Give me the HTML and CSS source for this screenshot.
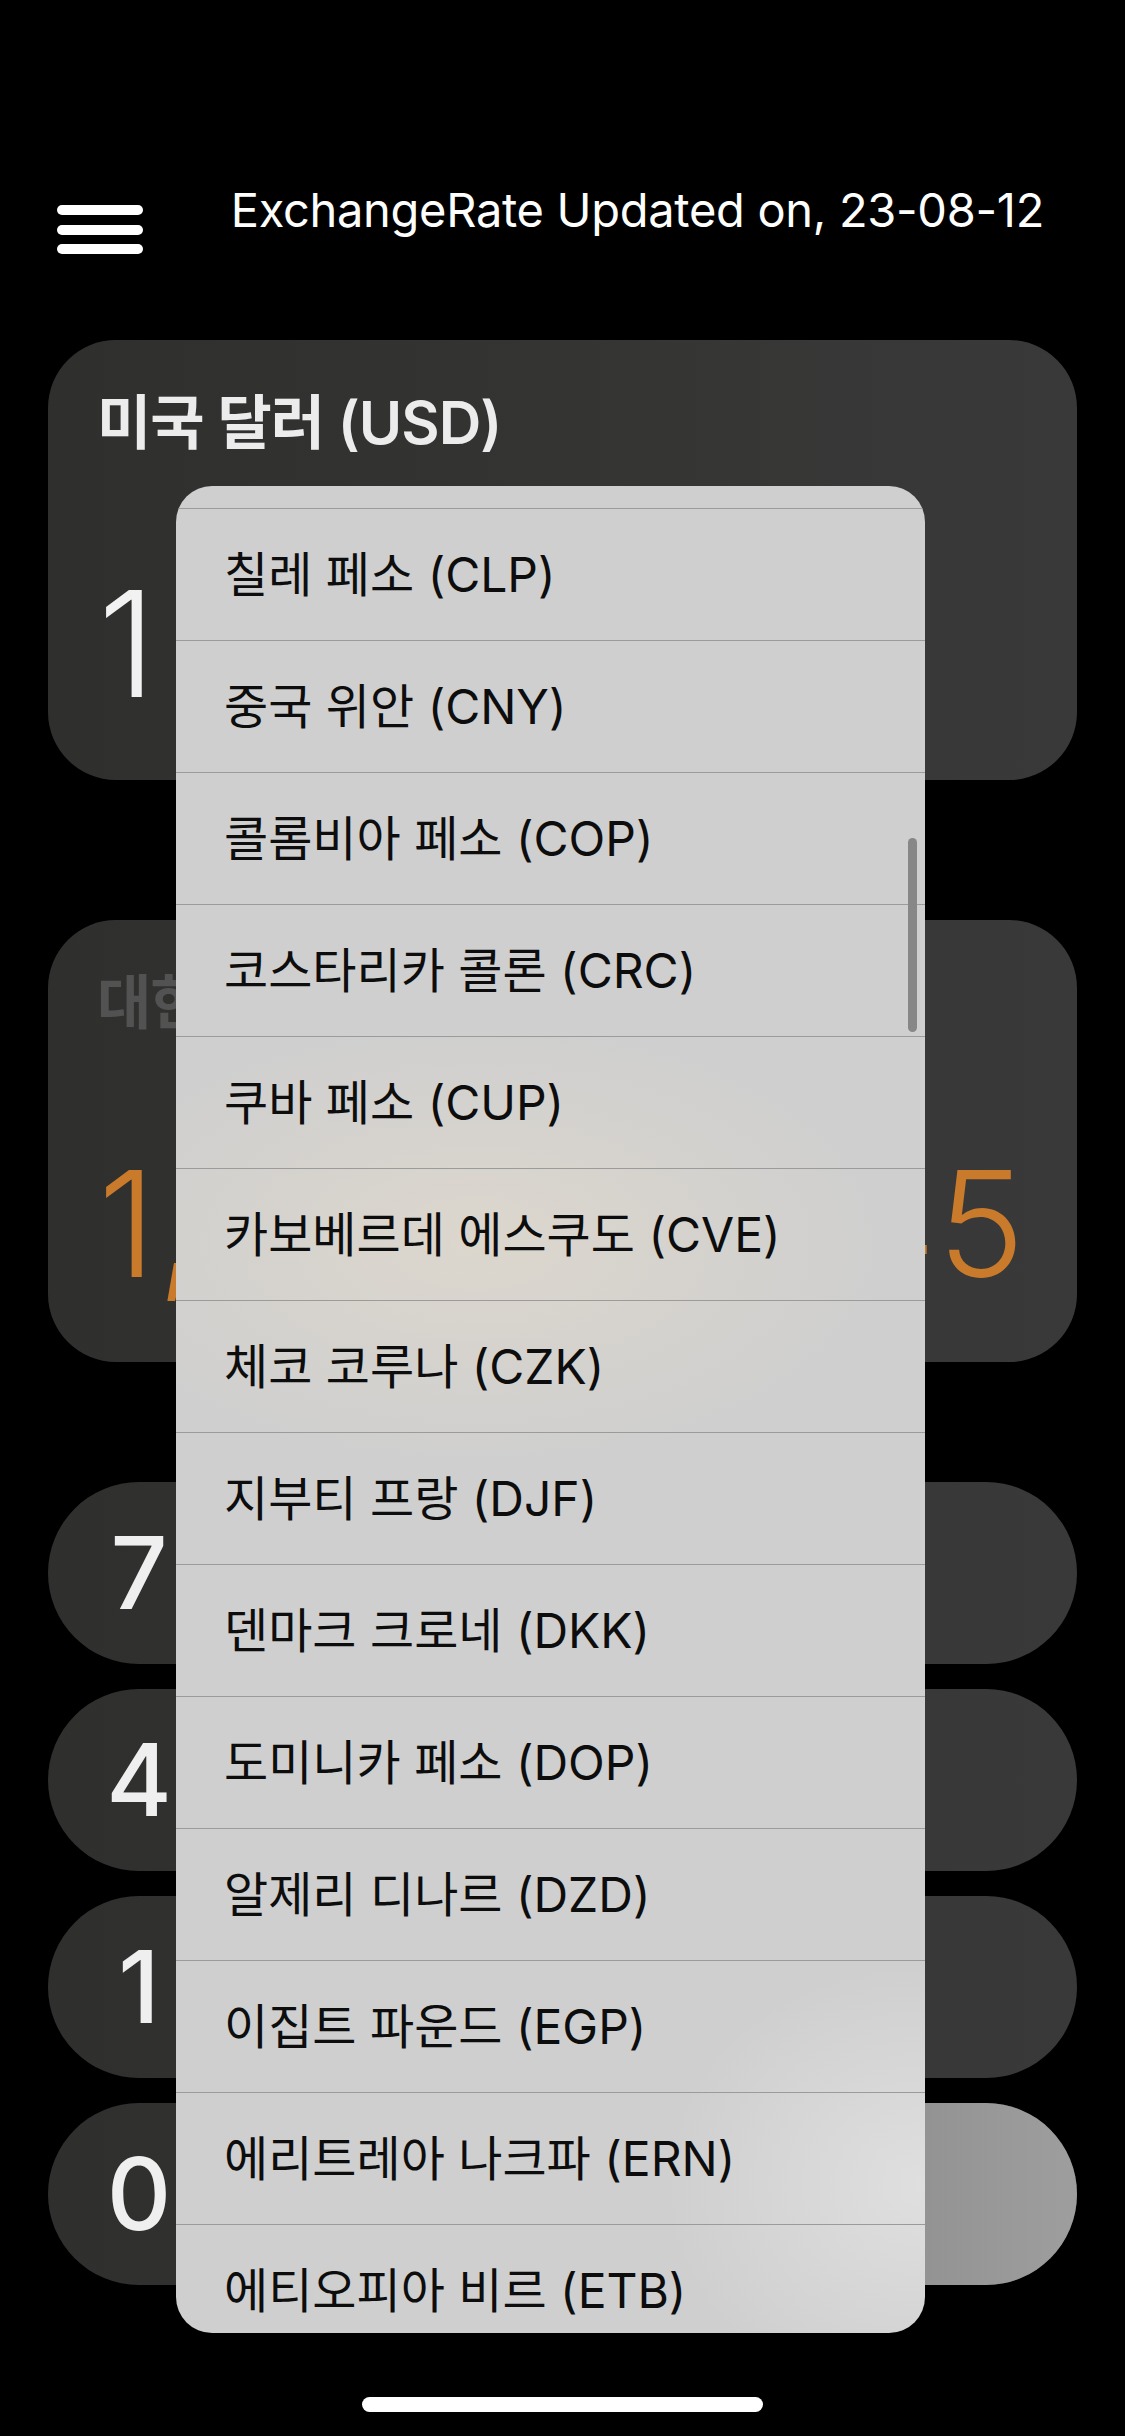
FILE: index.html
```html
<!DOCTYPE html>
<html lang="ko">
<head>
<meta charset="utf-8">
<title>Exchange Rate</title>
<link rel="stylesheet" href="styles.css">
</head>
<body>
<div class="screen">
  <header class="topbar">
    <button class="menu-btn" aria-label="menu"><span></span><span></span><span></span></button>
    <p class="updated">ExchangeRate Updated on, 23-08-12</p>
  </header>

  <main class="content">
    <section class="card card-from">
      <h2 class="card-label">미국 달러 (USD)</h2>
      <div class="card-value">1</div>
    </section>
    <section class="card card-to">
      <h2 class="card-label muted">대한민국 원 (KRW)</h2>
      <div class="card-value accent">1,331.802445</div>
    </section>

    <div class="keypad">
      <div class="key-row"><span class="key">7</span><span class="key">8</span><span class="key">9</span></div>
      <div class="key-row"><span class="key">4</span><span class="key">5</span><span class="key">6</span></div>
      <div class="key-row"><span class="key">1</span><span class="key">2</span><span class="key">3</span></div>
      <div class="key-row"><span class="key">0</span><span class="key">.</span><span class="key key-eq">=</span></div>
    </div>
  </main>

  <div class="dropdown">
    <ul class="dropdown-list">
      <li class="option">칠레 페소 (CLP)</li>
      <li class="option">중국 위안 (CNY)</li>
      <li class="option">콜롬비아 페소 (COP)</li>
      <li class="option">코스타리카 콜론 (CRC)</li>
      <li class="option">쿠바 페소 (CUP)</li>
      <li class="option">카보베르데 에스쿠도 (CVE)</li>
      <li class="option">체코 코루나 (CZK)</li>
      <li class="option">지부티 프랑 (DJF)</li>
      <li class="option">덴마크 크로네 (DKK)</li>
      <li class="option">도미니카 페소 (DOP)</li>
      <li class="option">알제리 디나르 (DZD)</li>
      <li class="option">이집트 파운드 (EGP)</li>
      <li class="option">에리트레아 나크파 (ERN)</li>
      <li class="option">에티오피아 비르 (ETB)</li>
    </ul>
    <div class="scroll-thumb"></div>
  </div>

  <div class="home-indicator"></div>
</div>
</body>
</html>
```

FILE: styles.css
```css
* {
  box-sizing: border-box;
  margin: 0;
  padding: 0;
}

html,
body {
  background: #000;
}

body {
  width: 1125px;
  height: 2436px;
  overflow: hidden;
  font-family: "Inter", "Noto Sans CJK KR", sans-serif;
}

.screen {
  position: relative;
  width: 1125px;
  height: 2436px;
  background: #000;
}

/* ---------- top bar ---------- */
.topbar {
  display: flex;
  justify-content: space-between;
  align-items: flex-start;
  height: 340px;
  padding: 205px 81px 0 57px;
}

.menu-btn {
  width: 86px;
  display: flex;
  flex-direction: column;
  gap: 9.5px;
  background: none;
  border: 0;
}

.menu-btn span {
  display: block;
  height: 10px;
  border-radius: 5px;
  background: #fff;
}

.updated {
  color: #fff;
  font-size: 47px;
  line-height: 1;
  margin-top: -19px;
  letter-spacing: -0.3px;
  white-space: nowrap;
}

/* ---------- cards ---------- */
.card {
  margin: 0 48px;
  border-radius: 68px;
  background: linear-gradient(90deg, #2f302e 0%, #343533 50%, #393939 100%);
  padding: 53px 49px 0;
}

.card-from {
  height: 440px;
}

.card-to {
  height: 442px;
  margin-top: 140px;
}

.card-label {
  font-size: 59px;
  font-weight: 600;
  line-height: 1;
  color: #ececec;
  letter-spacing: -1px;
  white-space: nowrap;
}

.card-label.muted {
  color: #525252;
}

.card-value {
  margin-top: 118px;
  padding-left: 1px;
  font-size: 147px;
  font-weight: 300;
  line-height: 1;
  color: #f2f2f2;
  white-space: nowrap;
}

.card-value.accent {
  color: #c97a2a;
  letter-spacing: 1.5px;
}

/* ---------- keypad ---------- */
.keypad {
  margin: 120px 48px 0;
  display: flex;
  flex-direction: column;
  gap: 25px;
}

.key-row {
  display: flex;
  height: 182px;
  border-radius: 91px;
  overflow: hidden;
  background: linear-gradient(90deg, #2f302e 0%, #343533 50%, #393939 100%);
}

.key {
  flex: 0 0 182px;
  display: flex;
  align-items: center;
  justify-content: center;
  color: #efefef;
  font-size: 100px;
  font-weight: 500;
  line-height: 1;
}

.key-eq {
  flex: 1 1 auto;
  background: linear-gradient(90deg, #7e7e7e 0%, #8b8b8b 60%, #9e9e9e 100%);
}

/* ---------- dropdown overlay ---------- */
.dropdown {
  position: absolute;
  left: 176px;
  top: 486px;
  width: 749px;
  height: 1847px;
  border-radius: 36px;
  overflow: hidden;
  background-color: #cfcfcf;
  background-image:
    radial-gradient(ellipse 55% 12% at 40% 41%, rgba(221, 215, 205, 0.95), rgba(221, 215, 205, 0) 100%),
    radial-gradient(ellipse 35% 12% at 100% 92%, rgba(224, 224, 224, 0.95), rgba(224, 224, 224, 0) 100%);
}

.dropdown-list {
  list-style: none;
  padding-top: 22px;
}

.option {
  display: flex;
  align-items: center;
  height: 132px;
  padding-left: 48px;
  border-top: 1px solid #9b9b9b;
  font-size: 48px;
  line-height: 1;
  color: #0d0d0d;
  white-space: nowrap;
}

.scroll-thumb {
  position: absolute;
  right: 8px;
  top: 352px;
  width: 9px;
  height: 194px;
  border-radius: 5px;
  background: #878787;
}

.home-indicator {
  position: absolute;
  left: 362px;
  top: 2397px;
  width: 401px;
  height: 15px;
  border-radius: 8px;
  background: #fff;
}
```
